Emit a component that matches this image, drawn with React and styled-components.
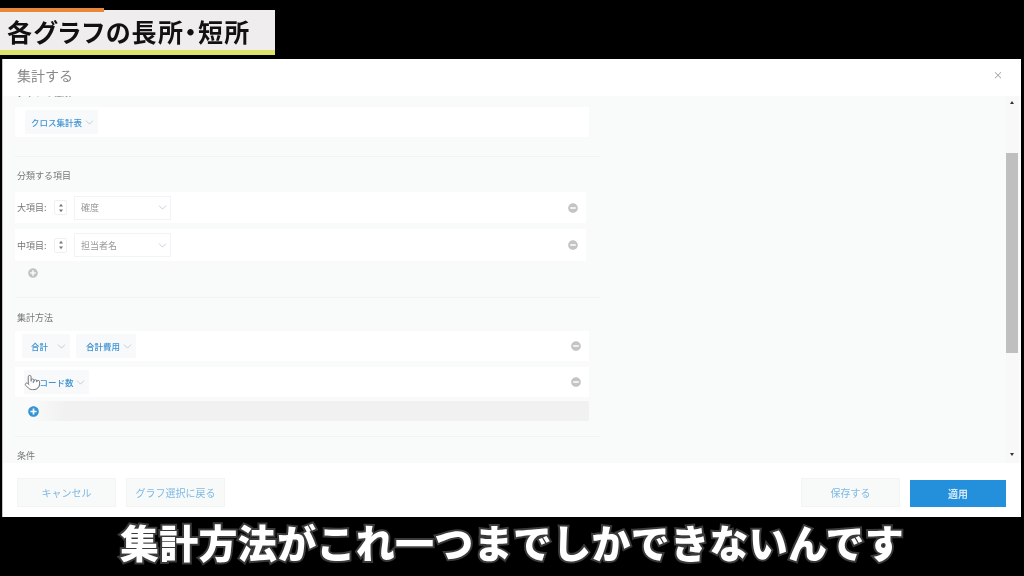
import React from 'react';
import styled, { createGlobalStyle } from 'styled-components';
import { ChevronDown, Pointer } from 'lucide-react';
import { FaMinusCircle, FaPlusCircle } from 'react-icons/fa';

const GlobalStyle = createGlobalStyle`
  html, body {
    margin: 0;
    padding: 0;
    background: #000;
  }
  * {
    box-sizing: border-box;
  }
`;

const Chevron = () => (
  <ChevronDown size={13} strokeWidth={1.2} color="#9fb9cc" style={{ flexShrink: 0 }} />
);

const Stepper = () => (
  <StepperBox>
    <svg width="6" height="10" viewBox="0 0 6 10">
      <path d="M3 0.8 L5 3.4 H1 Z M3 9.2 L5 6.6 H1 Z" fill="#777" />
    </svg>
  </StepperBox>
);

const App = () => {
  return (
    <Page>
      <GlobalStyle />
      <TopBand>
        <TitleTag>各グラフの長所・短所</TitleTag>
      </TopBand>
      <Dialog>
        <Header>
          <HeaderTitle>集計する</HeaderTitle>
          <Close>×</Close>
        </Header>
        <Body>
          <Content>
            <SectionLabel $top={-9}>グラフの種類</SectionLabel>
            <Card $top={8} $left={10}>
              <Group>
                <Chip $width={73} $pad={6}>クロス集計表<Chevron /></Chip>
              </Group>
            </Card>
            <Divider $top={19} />

            <SectionLabel $top={13}>分類する項目</SectionLabel>
            <Card $top={10} $height={31} $width={571} $left={2}>
              <Group>
                <RowLabel>大項目:</RowLabel>
                <Stepper />
                <Select>確度<Chevron /></Select>
              </Group>
              <RemoveIcon />
            </Card>
            <Card $top={6} $height={32} $width={571} $left={2}>
              <Group>
                <RowLabel>中項目:</RowLabel>
                <Stepper />
                <Select>担当者名<Chevron /></Select>
              </Group>
              <RemoveIcon />
            </Card>
            <AddRow $top={7}>
              <FaPlusCircle size={10} color="#c2c4c4" />
            </AddRow>
            <Divider $top={19} />

            <SectionLabel $top={14}>集計方法</SectionLabel>
            <Card $top={7} $left={7}>
              <Group>
                <Chip $width={48} $pad={9}>合計<Chevron /></Chip>
                <Chip $width={60} $pad={10}>合計費用<Chevron /></Chip>
              </Group>
              <RemoveIcon />
            </Card>
            <Card $top={6} $left={9}>
              <Group>
                <Chip $width={65} $pad={7}>レコード数<Chevron /></Chip>
              </Group>
              <RemoveIcon />
              <HandCursor>
                <Pointer size={17} strokeWidth={1.4} color="#777" fill="#fff" />
              </HandCursor>
            </Card>
            <GreyRow>
              <FaPlusCircle size={11} color="#3594d8" />
            </GreyRow>
            <Divider $top={15} />

            <SectionLabel $top={13}>条件</SectionLabel>
          </Content>
          <Scrollbar>
            <ArrowUp />
            <Thumb />
            <ArrowDown />
          </Scrollbar>
        </Body>
        <Footer>
          <Group>
            <FooterButton>キャンセル</FooterButton>
            <FooterButton>グラフ選択に戻る</FooterButton>
          </Group>
          <Group>
            <FooterButton>保存する</FooterButton>
            <ApplyButton>適用</ApplyButton>
          </Group>
        </Footer>
      </Dialog>
      <CaptionBand>
        <Caption>集計方法がこれ一つまでしかできないんです</Caption>
      </CaptionBand>
    </Page>
  );
};

const Page = styled.div`
  width: 1024px;
  height: 576px;
  overflow: hidden;
  background: #000;
  font-family: 'Noto Sans CJK JP', 'Noto Sans', sans-serif;
`;

const TopBand = styled.div`
  height: 59px;
  padding-top: 10px;
`;

const TitleTag = styled.div`
  position: relative;
  width: 275px;
  height: 45px;
  padding: 3px 0 0 7px;
  background: #efeded;
  border-bottom: 5px solid #dfe36a;
  color: #111;
  font-size: 25px;
  font-weight: 700;
  letter-spacing: 1.3px;
  line-height: 37px;
  white-space: nowrap;
  font-feature-settings: 'palt';
  filter: blur(0.4px);

  &::before {
    content: '';
    position: absolute;
    left: 0;
    top: -2px;
    width: 104px;
    height: 4px;
    background: #e8873a;
  }
`;

const Dialog = styled.div`
  display: flex;
  flex-direction: column;
  width: 1019px;
  height: 458px;
  margin-left: 2px;
  background: #fff;
  border-left: 1px solid #c4c4c4;
  filter: blur(0.6px);
`;

const Header = styled.div`
  display: flex;
  justify-content: space-between;
  align-items: center;
  height: 37px;
  flex-shrink: 0;
  padding: 0 18px 6px 14px;
`;

const HeaderTitle = styled.div`
  color: #888;
  font-size: 14px;
`;

const Close = styled.div`
  color: #999;
  font-size: 10px;
`;

const Body = styled.div`
  display: flex;
  justify-content: space-between;
  height: 367px;
  flex-shrink: 0;
  overflow: hidden;
  background: #f9fafa;
`;

const Content = styled.div`
  width: 600px;
  padding-left: 12px;
`;

const SectionLabel = styled.div`
  margin-top: ${(p) => p.$top}px;
  padding-left: 2px;
  height: 12px;
  line-height: 12px;
  color: #777;
  font-size: 9px;
`;

const Card = styled.div`
  position: relative;
  display: flex;
  justify-content: space-between;
  align-items: center;
  width: ${(p) => p.$width || 574}px;
  height: ${(p) => p.$height || 30}px;
  margin-top: ${(p) => p.$top}px;
  padding: 0 8px 0 ${(p) => p.$left}px;
  background: #fff;
`;

const Group = styled.div`
  display: flex;
  align-items: center;
  gap: 10px;
`;

const Chip = styled.div`
  display: flex;
  align-items: center;
  justify-content: space-between;
  width: ${(p) => p.$width}px;
  height: 24px;
  padding: 0 2px 0 ${(p) => p.$pad}px;
  margin-right: -4px;
  background: #f7f9fa;
  color: #3f93d2;
  font-size: 8.5px;
  font-weight: 500;
  white-space: nowrap;
`;

const RowLabel = styled.div`
  width: 37px;
  margin-right: -10px;
  color: #777;
  font-size: 9px;
  white-space: nowrap;
`;

const StepperBox = styled.div`
  display: flex;
  align-items: center;
  justify-content: center;
  width: 13px;
  height: 15px;
  margin-right: -3px;
  background: #fff;
  border: 1px solid #f0f0f0;
  border-radius: 2px;
`;

const Select = styled.div`
  display: flex;
  align-items: center;
  justify-content: space-between;
  width: 97px;
  height: 24px;
  padding: 0 1px 0 6px;
  background: #fff;
  border: 1px solid #f1f3f4;
  color: #999;
  font-size: 9px;
`;

const RemoveIcon = styled(FaMinusCircle)`
  width: 10px;
  height: 10px;
  color: #c4c4c4;
`;

const AddRow = styled.div`
  display: flex;
  align-items: center;
  height: 10px;
  margin-top: ${(p) => p.$top}px;
  padding-left: 13px;
`;

const GreyRow = styled.div`
  display: flex;
  align-items: center;
  width: 574px;
  height: 20px;
  margin-top: 4px;
  padding-left: 13px;
  background: linear-gradient(90deg, #f9fafa 15px, #f1f1f1 50px);
`;

const HandCursor = styled.div`
  position: absolute;
  left: 9px;
  top: 7px;
  display: flex;
`;

const Divider = styled.div`
  width: 585px;
  height: 1px;
  margin-top: ${(p) => p.$top}px;
  background: #f2f3f3;
`;

const Scrollbar = styled.div`
  display: flex;
  flex-direction: column;
  align-items: center;
  width: 12px;
  margin-right: 3px;
  background: #f8f8f8;
`;

const ArrowUp = styled.div`
  margin-top: 5px;
  border-left: 2.5px solid transparent;
  border-right: 2.5px solid transparent;
  border-bottom: 3px solid #333;
`;

const ArrowDown = styled.div`
  margin-top: 100px;
  border-left: 2.5px solid transparent;
  border-right: 2.5px solid transparent;
  border-top: 3px solid #333;
`;

const Thumb = styled.div`
  width: 12px;
  height: 200px;
  margin-top: 49px;
  background: #bfbfbf;
`;

const Footer = styled.div`
  display: flex;
  justify-content: space-between;
  align-items: flex-start;
  flex: 1;
  padding: 15px 15px 0 14px;
`;

const FooterButton = styled.div`
  display: flex;
  align-items: center;
  justify-content: center;
  width: 99px;
  height: 29px;
  background: #f8fafa;
  border: 1px solid #f3f5f5;
  color: #7db8e4;
  font-size: 10px;
  white-space: nowrap;
`;

const ApplyButton = styled.div`
  display: flex;
  align-items: center;
  justify-content: center;
  width: 96px;
  height: 27px;
  margin-top: 2px;
  background: #2490dc;
  color: #cfe7f8;
  font-size: 10px;
  font-weight: 700;
`;

const CaptionBand = styled.div`
  display: flex;
  justify-content: center;
  height: 59px;
  padding-top: 1px;
`;

const Caption = styled.div`
  color: #fff;
  font-size: 39px;
  font-weight: 900;
  letter-spacing: 0.3px;
  line-height: 46px;
  white-space: nowrap;
  -webkit-text-stroke: 4px #3a3a3a;
  paint-order: stroke fill;
  filter: blur(0.4px);
`;

export default App;
